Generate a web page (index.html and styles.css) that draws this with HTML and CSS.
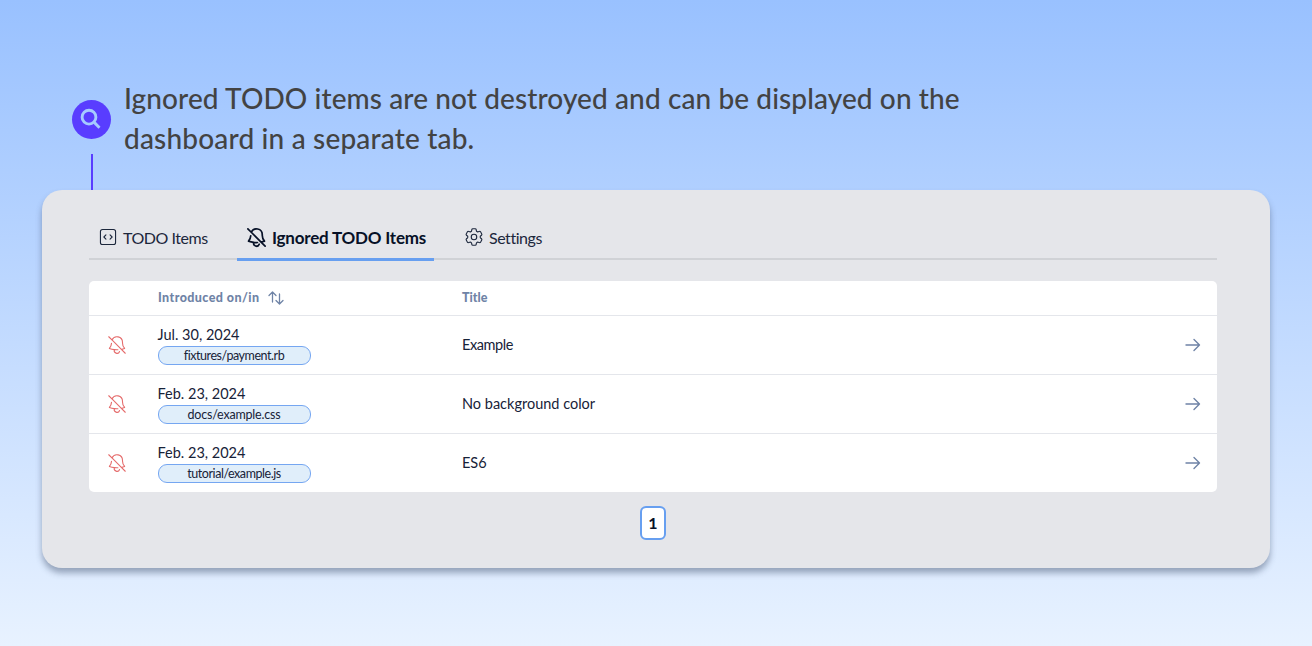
FILE: index.html
```html
<!DOCTYPE html>
<html lang="en">
<head>
<meta charset="utf-8">
<title>Ignored TODO items</title>
<link rel="stylesheet" href="styles.css">
</head>
<body>
<svg class="defs" aria-hidden="true">
  <symbol id="bell-slash" viewBox="0 0 24 24"><path d="M9.143 17.082a24.248 24.248 0 0 0 3.844.148m-3.844-.148a23.856 23.856 0 0 1-5.455-1.31 8.964 8.964 0 0 0 2.3-5.542m3.155 6.852a3 3 0 0 0 5.667 1.97m1.965-2.277L21 21m-4.225-4.225a23.81 23.81 0 0 0 3.536-1.003A8.967 8.967 0 0 1 18 9.75V9A6 6 0 0 0 6.53 6.53m10.245 10.245L6.53 6.53M3 3l3.53 3.53"/></symbol>
  <symbol id="arrow" viewBox="0 0 16 14"><path d="M1 7h13.5M9 1.5 14.5 7 9 12.5"/></symbol>
</svg>
<header class="intro">
  <div class="marker">
    <span class="badge"><svg viewBox="0 0 39 39"><circle cx="17" cy="17.2" r="6.9"/><path d="m22.2 22.4 5.3 5.3"/></svg></span>
    <span class="stem"></span>
  </div>
  <h1 class="headline"><span class="line-a">Ignored TODO items are not destroyed and can be displayed on the</span><br><span class="line-b">dashboard in a separate tab.</span></h1>
</header>
<main class="panel">
  <nav class="tabs">
    <a class="tab tab-todo"><svg class="icon" viewBox="0 0 24 24"><path d="M14.25 9.75 16.5 12l-2.25 2.25m-4.5 0L7.5 12l2.25-2.25M6 20.25h12A2.25 2.25 0 0 0 20.25 18V6A2.25 2.25 0 0 0 18 3.75H6A2.25 2.25 0 0 0 3.75 6v12A2.25 2.25 0 0 0 6 20.25Z"/></svg><span class="label">TODO Items</span></a>
    <a class="tab tab-active"><svg class="icon"><use href="#bell-slash"/></svg><span class="label">Ignored TODO Items</span></a>
    <a class="tab tab-settings"><svg class="icon" viewBox="0 0 24 24"><path d="M9.594 3.94c.09-.542.56-.94 1.11-.94h2.593c.55 0 1.02.398 1.11.94l.213 1.281c.063.374.313.686.645.87.074.04.147.083.22.127.325.196.72.257 1.075.124l1.217-.456a1.125 1.125 0 0 1 1.37.49l1.296 2.247a1.125 1.125 0 0 1-.26 1.431l-1.003.827c-.293.241-.438.613-.43.992a7.723 7.723 0 0 1 0 .255c-.008.378.137.75.43.991l1.004.827c.424.35.534.955.26 1.43l-1.298 2.247a1.125 1.125 0 0 1-1.369.491l-1.217-.456c-.355-.133-.75-.072-1.076.124a6.47 6.47 0 0 1-.22.128c-.331.183-.581.495-.644.869l-.213 1.281c-.09.543-.56.94-1.11.94h-2.594c-.55 0-1.019-.398-1.11-.94l-.213-1.281c-.062-.374-.312-.686-.644-.87a6.52 6.52 0 0 1-.22-.127c-.325-.196-.72-.257-1.076-.124l-1.217.456a1.125 1.125 0 0 1-1.369-.49l-1.297-2.247a1.125 1.125 0 0 1 .26-1.431l1.004-.827c.292-.24.437-.613.43-.991a6.932 6.932 0 0 1 0-.255c.007-.38-.138-.751-.43-.992l-1.004-.827a1.125 1.125 0 0 1-.26-1.43l1.297-2.247a1.125 1.125 0 0 1 1.37-.491l1.216.456c.356.133.751.072 1.076-.124.072-.044.146-.086.22-.128.332-.183.582-.495.644-.869l.214-1.28Z"/><path d="M15 12a3 3 0 1 1-6 0 3 3 0 0 1 6 0Z"/></svg><span class="label">Settings</span></a>
  </nav>
  <section class="table">
    <div class="row head">
      <span></span>
      <span class="sort"><span class="head-intro">Introduced on/in</span><svg class="sort-icon" viewBox="0 0 16 14"><path d="M4.5 11V1.2M1 4.5l3.5-3.5L8 4.5M11.5 3v9.8M8 9.5l3.5 3.5L15 9.5"/></svg></span>
      <span>Title</span>
      <span></span>
    </div>
    <div class="row">
      <svg class="mute"><use href="#bell-slash"/></svg>
      <div class="origin"><span class="date">Jul. 30, 2024</span><span class="file">fixtures/payment.rb</span></div>
      <span class="title title-tight">Example</span>
      <svg class="go"><use href="#arrow"/></svg>
    </div>
    <div class="row">
      <svg class="mute"><use href="#bell-slash"/></svg>
      <div class="origin"><span class="date">Feb. 23, 2024</span><span class="file file-wide">docs/example.css</span></div>
      <span class="title">No background color</span>
      <svg class="go"><use href="#arrow"/></svg>
    </div>
    <div class="row">
      <svg class="mute"><use href="#bell-slash"/></svg>
      <div class="origin"><span class="date">Feb. 23, 2024</span><span class="file">tutorial/example.js</span></div>
      <span class="title">ES6</span>
      <svg class="go"><use href="#arrow"/></svg>
    </div>
  </section>
  <div class="pager"><span class="page">1</span></div>
</main>
</body>
</html>
```
FILE: styles.css
```css
* { box-sizing: border-box; }
body {
  margin: 0;
  height: 646px;
  overflow: hidden;
  font-family: Lato, sans-serif;
  color: #172238;
  background: linear-gradient(#99c1ff, #e8f2ff);
}
svg { fill: none; stroke: currentColor; stroke-linecap: round; stroke-linejoin: round; flex: none; }
.defs { display: none; }
.intro { display: flex; height: 190px; padding: 78px 0 0 72px; gap: 13px; }
.marker { width: 39px; padding-top: 22px; display: flex; flex-direction: column; align-items: center; }
.badge { width: 39px; height: 39px; border-radius: 50%; background: #593dff; color: #a6cbff; }
.badge svg { display: block; width: 39px; height: 39px; stroke-width: 2.9; stroke-linecap: butt; }
.stem { width: 2px; height: 36px; margin-top: 15px; margin-left: 1px; background: #593dff; }
.headline { margin: 0; font-size: 28px; font-weight: 500; line-height: 40px; color: #434343; white-space: nowrap; }
.line-a { letter-spacing: .1px; }
.line-b { letter-spacing: .18px; }
.panel {
  width: 1228px;
  height: 378px;
  margin-left: 42px;
  padding: 26px 53px 0 47px;
  border-radius: 20px;
  background: #e5e6ea;
  box-shadow: 0 5px 6px rgba(60, 75, 105, .45);
}
.tabs { display: flex; height: 44px; border-bottom: 2px solid #d0d2d6; gap: 22px; }
.tab { display: flex; align-items: center; height: 44.5px; padding-bottom: 2px; font-size: 16px; letter-spacing: -.45px; white-space: nowrap; color: #1c273c; }
.tab .icon { width: 22px; height: 22px; stroke-width: 1.2; }
.tab .label { margin-left: 4px; }
.tab-todo { padding-left: 8px; width: 126px; }
.tab-active { width: 197px; padding: 1px 0 0 8px; font-size: 17px; letter-spacing: -.2px; font-weight: 700; color: #071127; border-bottom: 3px solid #679ff0; }
.tab-active .icon { width: 23px; height: 23px; stroke-width: 1.8; }
.tab-settings { padding-left: 7px; }
.table { margin-top: 20.5px; border-radius: 5px; background: #fff; overflow: hidden; }
.row { display: grid; grid-template-columns: 69px 304px 1fr 33px; align-items: center; height: 59px; border-top: 1px solid #e4e6eb; }
.head { height: 34.5px; border: 0; font-size: 12.5px; font-weight: 900; color: #6f83a6; }
.head-intro { letter-spacing: .42px; }
.sort { display: flex; align-items: center; gap: 9px; }
.sort-icon { width: 16px; height: 14px; stroke-width: 1.3; }
.mute { width: 22px; height: 22px; margin: 0 0 1px 16.5px; color: #e56c6c; stroke-width: 1.2; }
.origin { display: flex; flex-direction: column; margin-left: -.5px; }
.date { font-size: 14.5px; line-height: 18px; height: 20px; }
.file { display: flex; align-items: center; justify-content: center; width: 153px; height: 19px; border: 1.5px solid #75a6f1; border-radius: 9px; background: #e0eefa; font-size: 12.5px; letter-spacing: -.45px; white-space: nowrap; }
.file-wide { letter-spacing: -.2px; }
.title { font-size: 14.5px; padding-bottom: 2px; }
.title-tight { letter-spacing: -.42px; }
.go { width: 16px; height: 14px; margin-left: .5px; color: #6f83a6; stroke-width: 1.4; }
.pager { display: flex; justify-content: center; margin-top: 14px; }
.page { display: flex; align-items: center; justify-content: center; width: 26px; height: 34px; padding-bottom: 2px; border: 2px solid #679ff0; border-radius: 6px; background: #fff; font-size: 16px; font-weight: 700; color: #071127; }
```
